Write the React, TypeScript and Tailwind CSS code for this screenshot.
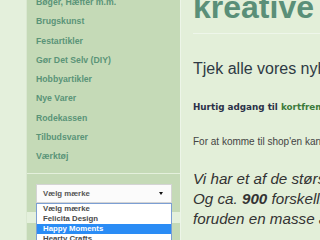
import React from 'react';

const categories = [
  'Bøger, Hæfter m.m.',
  'Brugskunst',
  'Festartikler',
  'Gør Det Selv (DIY)',
  'Hobbyartikler',
  'Nye Varer',
  'Rodekassen',
  'Tilbudsvarer',
  'Værktøj',
];

const brands = ['Vælg mærke', 'Felicita Design', 'Happy Moments', 'Hearty Crafts'];

const Sidebar: React.FC = () => {
  return (
    <aside className="w-[153px] shrink-0 flex flex-col">
      {/* Category menu */}
      <div className="bg-[#c5dab7] h-[173px] pl-[9px] overflow-hidden">
        <ul className="-mt-[7px]">
          {categories.map((c) => (
            <li
              key={c}
              className="h-[19.3px] leading-[19.3px] text-[8.7px] font-bold text-[#5a9477] whitespace-nowrap"
            >
              {c}
            </li>
          ))}
        </ul>
      </div>

      {/* Brand select */}
      <div className="mt-[1px] bg-[#c5dab7] h-[38px] pt-[10px] pl-[9px] pr-[8px] relative z-10">
        <div className="h-[19px] bg-[#fbfbfb] border border-[#d4d4d4] flex items-center justify-between pl-[6px] pr-[8px]">
          <span className="text-[7.8px] font-bold text-[#555]">Vælg mærke</span>
          <span className="w-0 h-0 border-l-[2.5px] border-r-[2.5px] border-t-[3px] border-l-transparent border-r-transparent border-t-[#111]" />
        </div>
        <ul className="absolute left-[9px] right-[8px] top-[29px] bg-white border border-[#7c9fd4]">
          {brands.map((b) => (
            <li
              key={b}
              className={`h-[10px] leading-[10px] pl-[6px] text-[7.8px] font-bold ${
                b === 'Happy Moments' ? 'bg-[#2a8cf5] text-white' : 'text-[#4a4a4a]'
              }`}
            >
              {b}
            </li>
          ))}
        </ul>
      </div>

      <div className="mt-[11px] bg-[#c5dab7] flex-1" />
    </aside>
  );
};

const Content: React.FC = () => {
  return (
    <main className="flex-1 border-l border-[#edf5e8] bg-[#e3efd9] pl-[12px] overflow-hidden whitespace-nowrap">
      <h1 className="-mt-[8px] h-[31px] leading-[31px] text-[32px] font-bold text-[#5a8f78]">kreative</h1>
      <div className="mt-[10px] border-t border-[#eef6ea]" />
      <p className="mt-[25px] h-[20px] leading-[20px] text-[16px] text-[#2e3a44]">
        Tjek alle vores nyheder her
      </p>
      <p className="mt-[21.5px] h-[12px] leading-[12px] text-[8.8px] font-bold text-[#2b3148] font-['DejaVu_Sans',Verdana,sans-serif]">
        Hurtig adgang til <span className="text-[#3c7b3c]">kortfremstilling</span>
      </p>
      <p className="mt-[23.5px] h-[12px] leading-[12px] text-[10px] text-[#444]">
        For at komme til shop'en kan du klikke her
      </p>
      <p className="mt-[21px] leading-[20px] text-[15.2px] italic text-[#333]">
        Vi har et af de største udvalg af stempler
        <br />
        Og ca. <b>900</b> forskellige motivstempler
        <br />
        foruden en masse andre ting.
      </p>
    </main>
  );
}

export default function App() {
  return (
    <div className="w-[320px] h-[240px] overflow-hidden bg-[#e4f0dc] flex font-['Liberation_Sans',Arial,sans-serif]">
      <div className="w-[27px] shrink-0 border-r border-[#dae8d1]" />
      <Sidebar />
      <Content />
    </div>
  );
}
